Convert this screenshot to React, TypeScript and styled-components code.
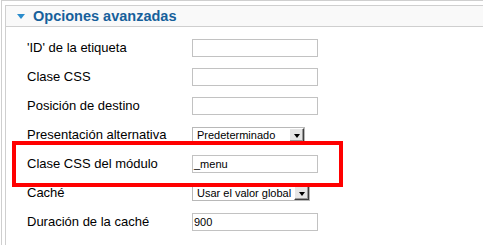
import React from 'react'
import styled, { createGlobalStyle } from 'styled-components'

const GlobalStyle = createGlobalStyle`
    html, body {
        margin: 0;
        padding: 0;
        background: #fff;
    }
    body {
        font-family: 'Liberation Sans', Arial, sans-serif;
    }
`

type Field =
    | { label: string; kind: 'text'; value?: string }
    | { label: string; kind: 'select'; value: string; width: number }

const fields: Field[] = [
    { label: "'ID' de la etiqueta", kind: 'text' },
    { label: 'Clase CSS', kind: 'text' },
    { label: 'Posición de destino', kind: 'text' },
    { label: 'Presentación alternativa', kind: 'select', value: 'Predeterminado', width: 113 },
    { label: 'Clase CSS del módulo', kind: 'text', value: '_menu' },
    { label: 'Caché', kind: 'select', value: 'Usar el valor global', width: 118 },
    { label: 'Duración de la caché', kind: 'text', value: '900' },
]

const App = () => {
    return (
        <>
            <GlobalStyle />
            <Frame>
                <Panel>
                    <Header>
                        <Arrow />
                        <Title>Opciones avanzadas</Title>
                    </Header>
                    <Form>
                        {fields.map((f) => (
                            <Row key={f.label}>
                                <Label>{f.label}</Label>
                                {f.kind === 'text' ? (
                                    <TextBox>{f.value}</TextBox>
                                ) : (
                                    <Select $width={f.width}>
                                        <SelectText>{f.value}</SelectText>
                                        <SelectButton>
                                            <Caret />
                                        </SelectButton>
                                    </Select>
                                )}
                            </Row>
                        ))}
                    </Form>
                </Panel>
                <Highlight />
            </Frame>
        </>
    )
}

export default App

const Frame = styled.div`
    position: relative;
    margin-left: 1px;
    height: 245px;
    box-sizing: border-box;
    border-top: 1px solid #cfcfcf;
    border-left: 1px solid #cfcfcf;
    padding: 4px 0 0 3px;
`

const Panel = styled.div`
    height: 100%;
    border-top: 1px solid #cfcfcf;
    border-left: 1px solid #cfcfcf;
`

const Header = styled.div`
    display: flex;
    align-items: center;
    height: 20px;
    padding-left: 11px;
    background: #f9f9f9;
    border-bottom: 1px solid #cfcfcf;
`

const Arrow = styled.span`
    width: 0;
    height: 0;
    border-left: 4.5px solid transparent;
    border-right: 4.5px solid transparent;
    border-top: 5px solid #2a8ccc;
    margin-top: 1px;
    margin-right: 8px;
`

const Title = styled.span`
    font-size: 14.5px;
    font-weight: bold;
    color: #16609b;
`

const Form = styled.div`
    display: flex;
    flex-direction: column;
    padding: 6px 0 0 21px;
`

const Row = styled.div`
    display: flex;
    align-items: center;
    height: 29px;
`

const Label = styled.span`
    width: 165px;
    font-size: 13px;
    color: #000;
`

const TextBox = styled.div`
    box-sizing: border-box;
    width: 126px;
    height: 18px;
    border: 1px solid #c2c2c2;
    padding-left: 1px;
    font-size: 11px;
    line-height: 16px;
    color: #000;
`

const Select = styled.div<{ $width: number }>`
    box-sizing: border-box;
    display: flex;
    align-items: stretch;
    width: ${(p) => p.$width}px;
    height: 16px;
    border: 1px solid #b8b8b8;
    background: #fff;
`

const SelectText = styled.span`
    flex: 1;
    padding-left: 4px;
    font-size: 11px;
    line-height: 14px;
    color: #000;
    white-space: nowrap;
    overflow: hidden;
`

const SelectButton = styled.span`
    box-sizing: border-box;
    display: flex;
    align-items: center;
    justify-content: center;
    width: 15px;
    background: #e6e6e6;
    border-top: 1px solid #fff;
    border-left: 1px solid #fff;
    border-right: 1px solid #404040;
    border-bottom: 1px solid #404040;
    box-shadow: inset -1px -1px 0 #9a9a9a;
`

const Caret = styled.span`
    width: 0;
    height: 0;
    border-left: 3.5px solid transparent;
    border-right: 3.5px solid transparent;
    border-top: 4px solid #000;
    margin-top: 2px;
`

const Highlight = styled.div`
    position: absolute;
    left: 10px;
    top: 140px;
    width: 331px;
    height: 46px;
    box-sizing: border-box;
    border: 4px solid #ff0000;
    pointer-events: none;
`
